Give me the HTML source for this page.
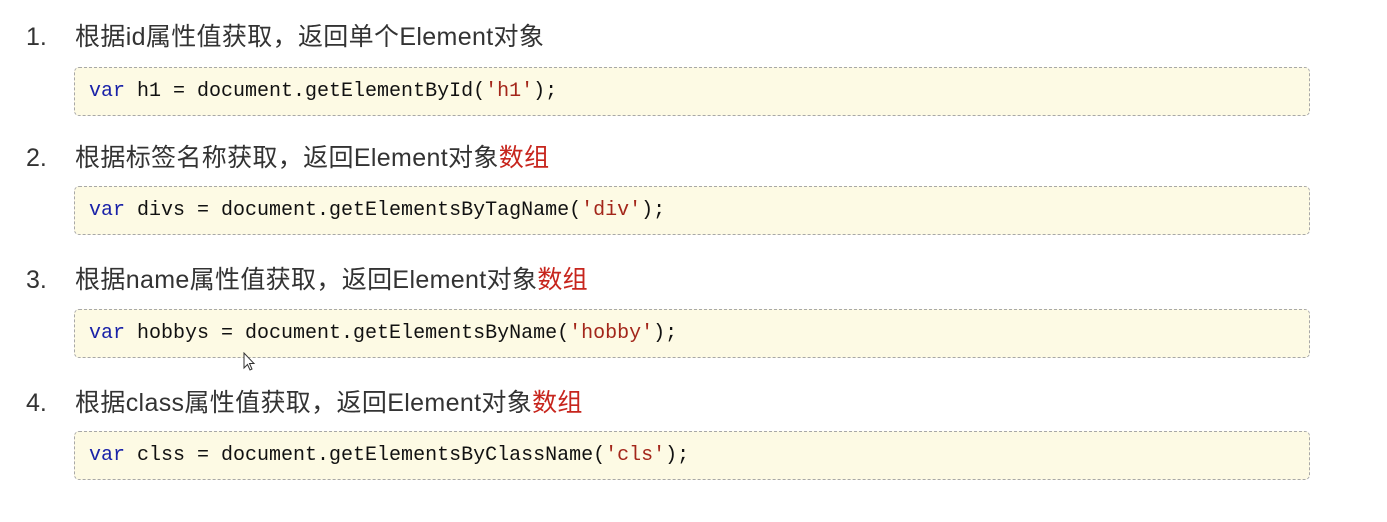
<!DOCTYPE html>
<html><head><meta charset="utf-8"><style>
body{margin:0;width:1387px;height:522px;background:#fff;position:relative;overflow:hidden;font-family:"Liberation Sans","Noto Sans CJK SC",sans-serif;}
.h{position:absolute;left:0;height:36px;line-height:36px;font-size:25px;color:#333;white-space:nowrap}
.h .n{position:absolute;left:26px}
.h .t{position:absolute;left:75px;letter-spacing:0.35px}
.r{color:#c7251d}
.c{position:absolute;left:74px;width:1234px;height:47px;border:1px dashed #a8a8a8;border-radius:5px;background:#fdfae4;font-family:"Liberation Mono",monospace;font-size:20px;line-height:47px;color:#111;white-space:pre}
.c span.p{position:absolute;left:14px}
.k{color:#1a22a8}.s{color:#a3261a}
</style></head><body>
<div class="h" style="top:19px"><span class="n">1.</span><span class="t">根据id属性值获取，返回单个Element对象</span></div>
<div class="c" style="top:67px"><span class="p"><span class="k">var</span> h1 = document.getElementById(<span class="s">'h1'</span>);</span></div>
<div class="h" style="top:140px"><span class="n">2.</span><span class="t">根据标签名称获取，返回Element对象<span class="r">数组</span></span></div>
<div class="c" style="top:186px"><span class="p"><span class="k">var</span> divs = document.getElementsByTagName(<span class="s">'div'</span>);</span></div>
<div class="h" style="top:262px"><span class="n">3.</span><span class="t">根据name属性值获取，返回Element对象<span class="r">数组</span></span></div>
<div class="c" style="top:309px"><span class="p"><span class="k">var</span> hobbys = document.getElementsByName(<span class="s">'hobby'</span>);</span></div>
<div class="h" style="top:385px"><span class="n">4.</span><span class="t">根据class属性值获取，返回Element对象<span class="r">数组</span></span></div>
<div class="c" style="top:431px"><span class="p"><span class="k">var</span> clss = document.getElementsByClassName(<span class="s">'cls'</span>);</span></div>
<svg style="position:absolute;left:243px;top:352px" width="14" height="20" viewBox="0 0 14 20"><path d="M1 1 L1 16 L4.5 12.5 L7 18 L9 17 L6.5 11.5 L11 11.5 Z" fill="#fff" stroke="#333" stroke-width="1"/></svg>
</body></html>
